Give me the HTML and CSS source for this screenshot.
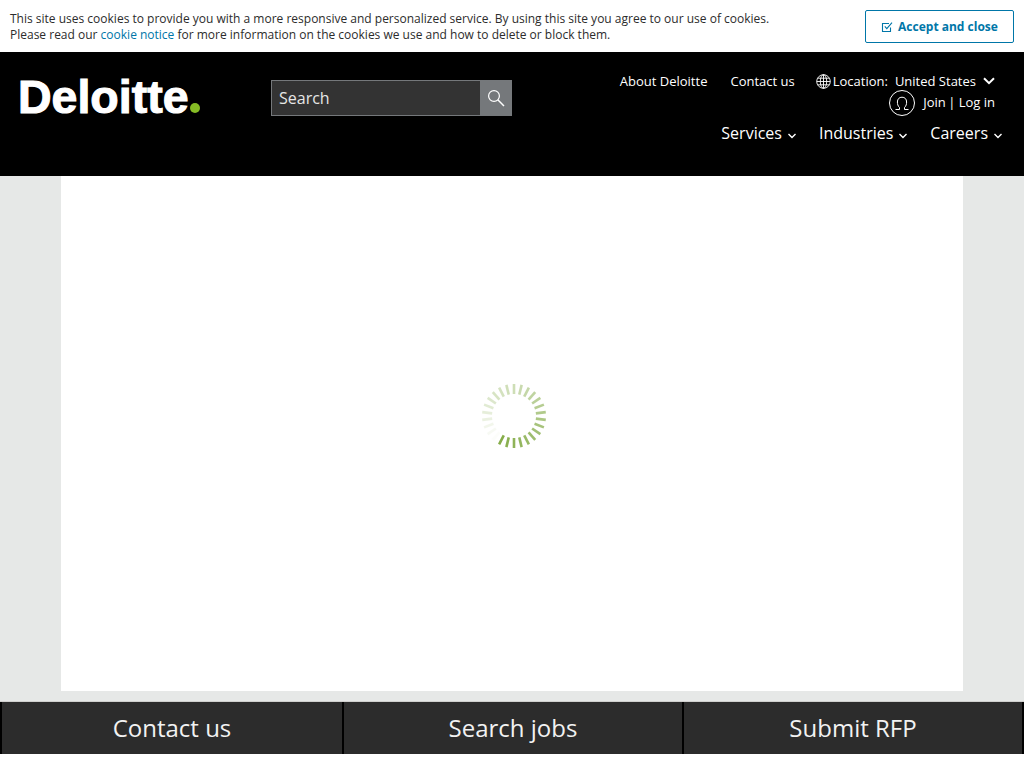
FILE: index.html
```html
<!DOCTYPE html>
<html lang="en">
<head>
<meta charset="utf-8">
<title>Deloitte</title>
<link rel="stylesheet" href="styles.css">
</head>
<body>
<section class="cookie">
  <p class="cookie-text">This site uses cookies to provide you with a more responsive and personalized service. By using this site you agree to our use of cookies.<br>Please read our <a href="#">cookie notice</a> for more information on the cookies we use and how to delete or block them.</p>
  <button class="accept" type="button">
    <svg class="accept-icon" width="12" height="12" viewBox="0 0 12 12" fill="none" stroke="#0076a8" stroke-width="1.1"><path d="M9.5 6.5V10.5H1.5V2.5H8"/><path d="M3.8 5.4L5.8 7.6L11 1.6"/></svg>
    Accept and close
  </button>
</section>
<header class="masthead">
  <a class="logo" href="#">Deloitte<span class="logo-dot"></span></a>
  <form class="search">
    <span class="search-input">Search</span>
    <span class="search-btn">
      <svg width="18" height="18" viewBox="0 0 18 18" fill="none" stroke="#fff" stroke-width="1.2"><circle cx="7" cy="7" r="5.4"/><path d="M10.8 10.8L17 17" stroke-width="1.5"/></svg>
    </span>
  </form>
  <nav class="nav">
    <div class="nav-top">
      <a href="#">About Deloitte</a>
      <a href="#">Contact us</a>
      <span class="location">
        <svg width="15" height="15" viewBox="0 0 15 15" fill="none" stroke="#fff" stroke-width="0.9"><circle cx="7.5" cy="7.5" r="6.8"/><ellipse cx="7.5" cy="7.5" rx="3.2" ry="6.8"/><path d="M7.5 0.7V14.3M0.7 7.5H14.3M1.7 4.2H13.3M1.7 10.8H13.3"/></svg>
        <span class="location-label">Location:</span>
        <span class="location-value">United States</span>
        <svg class="location-caret" width="12" height="8" viewBox="0 0 12 8" fill="none" stroke="#fff" stroke-width="2"><path d="M1 1.2L6 6.2L11 1.2"/></svg>
      </span>
    </div>
    <div class="nav-user">
      <svg class="user-icon" width="26" height="26" viewBox="0 0 26 26" fill="none" stroke="#fff" stroke-width="1"><circle cx="13" cy="13" r="12.5"/><path d="M6.5 19.5H10.5V17.5C8.8 16 8.4 14 8.4 12C8.4 9 10.2 7.2 13 7.2C15.8 7.2 17.6 9 17.6 12C17.6 14 17.2 16 15.5 17.5V19.5H19.5"/></svg>
      <span class="user-links"><a class="join" href="#">Join</a> | <a href="#">Log in</a></span>
    </div>
    <div class="nav-main">
      <a href="#">Services<svg class="caret" width="10" height="6" viewBox="0 0 10 6" fill="none" stroke="#fff" stroke-width="1.4"><path d="M1.5 1L5 4.5L8.5 1"/></svg></a>
      <a href="#">Industries<svg class="caret" width="10" height="6" viewBox="0 0 10 6" fill="none" stroke="#fff" stroke-width="1.4"><path d="M1.5 1L5 4.5L8.5 1"/></svg></a>
      <a href="#">Careers<svg class="caret" width="10" height="6" viewBox="0 0 10 6" fill="none" stroke="#fff" stroke-width="1.4"><path d="M1.5 1L5 4.5L8.5 1"/></svg></a>
    </div>
  </nav>
</header>
<main class="stage">
  <div class="panel">
    <svg class="spinner" width="66" height="66" viewBox="-33 -33 66 66" stroke="#86ad4a" stroke-width="2.6">
      <line x1="0" y1="-22" x2="0" y2="-32" opacity="0.40" transform="rotate(0)"/>
      <line x1="0" y1="-22" x2="0" y2="-32" opacity="0.44" transform="rotate(13.85)"/>
      <line x1="0" y1="-22" x2="0" y2="-32" opacity="0.48" transform="rotate(27.7)"/>
      <line x1="0" y1="-22" x2="0" y2="-32" opacity="0.52" transform="rotate(41.5)"/>
      <line x1="0" y1="-22" x2="0" y2="-32" opacity="0.56" transform="rotate(55.4)"/>
      <line x1="0" y1="-22" x2="0" y2="-32" opacity="0.60" transform="rotate(69.2)"/>
      <line x1="0" y1="-22" x2="0" y2="-32" opacity="0.64" transform="rotate(83.1)"/>
      <line x1="0" y1="-22" x2="0" y2="-32" opacity="0.68" transform="rotate(96.9)"/>
      <line x1="0" y1="-22" x2="0" y2="-32" opacity="0.72" transform="rotate(110.8)"/>
      <line x1="0" y1="-22" x2="0" y2="-32" opacity="0.76" transform="rotate(124.6)"/>
      <line x1="0" y1="-22" x2="0" y2="-32" opacity="0.80" transform="rotate(138.5)"/>
      <line x1="0" y1="-22" x2="0" y2="-32" opacity="0.84" transform="rotate(152.3)"/>
      <line x1="0" y1="-22" x2="0" y2="-32" opacity="0.88" transform="rotate(166.2)"/>
      <line x1="0" y1="-22" x2="0" y2="-32" opacity="0.92" transform="rotate(180)"/>
      <line x1="0" y1="-22" x2="0" y2="-32" opacity="0.96" transform="rotate(193.8)"/>
      <line x1="0" y1="-22" x2="0" y2="-32" opacity="1" transform="rotate(207.7)"/>
      <line x1="0" y1="-22" x2="0" y2="-32" opacity="0.02" transform="rotate(221.5)"/>
      <line x1="0" y1="-22" x2="0" y2="-32" opacity="0.06" transform="rotate(235.4)"/>
      <line x1="0" y1="-22" x2="0" y2="-32" opacity="0.10" transform="rotate(249.2)"/>
      <line x1="0" y1="-22" x2="0" y2="-32" opacity="0.16" transform="rotate(263.1)"/>
      <line x1="0" y1="-22" x2="0" y2="-32" opacity="0.20" transform="rotate(276.9)"/>
      <line x1="0" y1="-22" x2="0" y2="-32" opacity="0.24" transform="rotate(290.8)"/>
      <line x1="0" y1="-22" x2="0" y2="-32" opacity="0.28" transform="rotate(304.6)"/>
      <line x1="0" y1="-22" x2="0" y2="-32" opacity="0.32" transform="rotate(318.5)"/>
      <line x1="0" y1="-22" x2="0" y2="-32" opacity="0.35" transform="rotate(332.3)"/>
      <line x1="0" y1="-22" x2="0" y2="-32" opacity="0.38" transform="rotate(346.2)"/>
    </svg>
  </div>
</main>
<footer class="cta">
  <a class="cta-item" href="#">Contact us</a>
  <a class="cta-item" href="#">Search jobs</a>
  <a class="cta-item cta-last" href="#">Submit RFP</a>
</footer>
</body>
</html>
```
FILE: styles.css
```css
* { box-sizing: border-box; }
html, body { margin: 0; padding: 0; }
body {
  width: 1024px;
  height: 768px;
  overflow: hidden;
  background: #fff;
  font-family: "Open Sans", "Liberation Sans", sans-serif;
  color: #fff;
}
a { color: inherit; text-decoration: none; }

.cookie {
  height: 52px;
  display: flex;
  justify-content: space-between;
  align-items: flex-start;
  padding: 10px 10px 0;
  background: #fff;
}
.cookie-text {
  margin: 1px 0 0;
  font-size: 12px;
  line-height: 16px;
  color: #2c2c2c;
}
.cookie-text a { color: #0076a8; }
.accept {
  width: 149px;
  height: 33px;
  display: flex;
  align-items: center;
  justify-content: center;
  gap: 5px;
  padding: 0;
  background: #fff;
  border: 1px solid #0076a8;
  border-radius: 2px;
  color: #0076a8;
  font: 700 12px "Open Sans", sans-serif;
}
.accept-icon { flex: none; }

.masthead {
  height: 124px;
  display: flex;
  align-items: flex-start;
  background: #000;
  padding-left: 18px;
}
.logo {
  width: 253px;
  margin-top: 18px;
  font-family: "Liberation Sans", Arial, sans-serif;
  font-size: 46.5px;
  line-height: 55px;
  font-weight: 700;
  -webkit-text-stroke: 1.1px #fff;
  color: #fff;
  display: flex;
  align-items: baseline;
}
.logo-dot {
  width: 10px;
  height: 10px;
  margin-left: 1px;
  border-radius: 50%;
  background: #86bc25;
  flex: none;
}
.search {
  width: 241px;
  height: 36px;
  margin-top: 28px;
  display: flex;
  border: 1px solid #75787b;
  background: #333;
}
.search-input {
  flex: 1;
  padding-left: 7px;
  font-size: 16px;
  line-height: 34px;
  color: #e6e6e6;
}
.search-btn {
  width: 32px;
  margin: -1px -1px -1px 0;
  background: #75787b;
  display: flex;
  align-items: center;
  justify-content: center;
}
.nav {
  flex: 1;
  display: flex;
  flex-direction: column;
  align-items: flex-end;
  padding: 20px 21px 0 0;
}
.nav-top {
  display: flex;
  align-items: center;
  gap: 23px;
  height: 18px;
  margin-right: 8px;
  font-size: 13px;
  line-height: 18px;
}
.location { display: flex; align-items: center; margin-left: -2px; }
.location-label { margin-left: 2px; }
.location-value { margin-left: 7px; }
.location-caret { margin-left: 7px; }
.nav-user {
  display: flex;
  align-items: flex-start;
  height: 26px;
  margin-right: 8px;
  font-size: 13px;
}
.user-icon { margin-right: 8px; }
.user-links { line-height: 24px; }
.join { margin-right: -1px; }
.nav-main {
  display: flex;
  gap: 22px;
  margin-top: 6px;
  font-size: 16px;
  line-height: 22px;
}
.caret { margin-left: 5px; }

.stage {
  height: 526px;
  padding: 0 61px 11px;
  background: #e6e8e7;
  border-bottom: 1px solid #d0d0ce;
}
.panel {
  height: 515px;
  padding-bottom: 35px;
  background: #fff;
  display: flex;
  align-items: center;
  justify-content: center;
}
.spinner { margin-left: 3px; }

.cta {
  height: 52px;
  display: grid;
  grid-template-columns: 342px 340px 342px;
  background: #2c2c2c;
}
.cta-item {
  display: flex;
  align-items: center;
  justify-content: center;
  padding-bottom: 2px;
  border-left: 2px solid #000;
  font-size: 24px;
  color: #f2f2f2;
}
.cta-last { border-right: 2px solid #000; }
```
